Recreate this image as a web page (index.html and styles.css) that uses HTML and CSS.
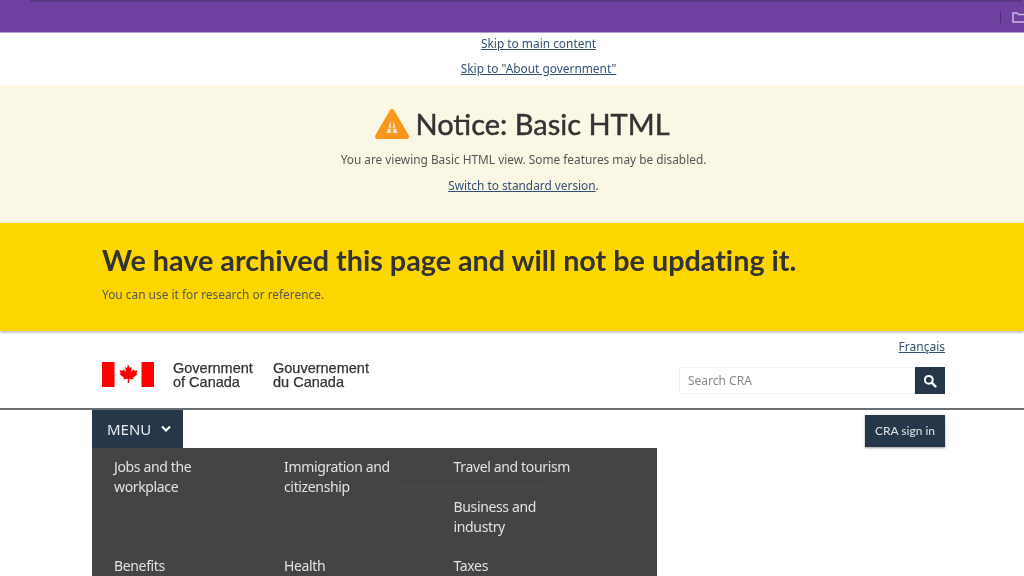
FILE: index.html
```html
<!DOCTYPE html>
<html lang="en">
<head>
<meta charset="utf-8">
<title>We have archived this page</title>
<link rel="stylesheet" href="styles.css">
</head>
<body>
<div class="browser-bar">
  <div class="browser-strip"></div>
  <div class="browser-tools">
    <span class="tool-divider"></span>
    <svg class="tool-folder" width="14" height="11" viewBox="0 0 14 11"><path d="M1 1h4l1.500 1.500H13V10H1z" fill="none" stroke="#cdbbe2" stroke-width="1.500"/></svg>
  </div>
</div>
<nav class="skip">
  <a href="#main">Skip to main content</a>
  <a href="#about">Skip to "About government"</a>
</nav>
<section class="notice">
  <h2 class="notice-title">
    <svg class="notice-icon" width="36" height="32" viewBox="0 0 36 32"><path d="M18 3.500 L32.500 28.500 H3.500 Z" fill="#f7981d" stroke="#f7981d" stroke-width="5" stroke-linejoin="round"/><path d="M18 9.500 L23.500 25 H12.500 Z" fill="#fdeccd"/><path d="M16.800 9h2.400v10h-2.400zM16.800 21h2.400v4h-2.400zM12 19.500h12v1.300H12z" fill="#f7981d"/></svg>
    Notice: Basic HTML
  </h2>
  <p class="notice-text">You are viewing Basic HTML view. Some features may be disabled.</p>
  <p class="notice-text notice-switch"><a href="#standard">Switch to standard version</a>.</p>
</section>
<section class="archived">
  <h2 class="archived-title">We have archived this page and will not be updating it.</h2>
  <p class="archived-text">You can use it for research or reference.</p>
</section>
<header class="site-header">
  <div class="brand">
    <svg class="flag" width="52" height="25" viewBox="0 0 52 25">
      <rect width="12.500" height="25" fill="#f00"/>
      <rect x="39.500" width="12.500" height="25" fill="#f00"/>
      <path d="M26 2.500l2 3.600 1.900-1-.7 4.700 2.500-2.500.6 1.500 3.100-.6-1 3.300 1.200.6-4.500 3.700.5 1.600-4.400-.6.100 4.200h-1.600l.1-4.200-4.400.6.500-1.600-4.500-3.700 1.200-.6-1-3.300 3.100.6.600-1.500 2.500 2.500-.7-4.700 1.900 1z" fill="#f00"/>
    </svg>
    <div class="sig sig-en">Government<br>of Canada</div>
    <div class="sig sig-fr">Gouvernement<br>du Canada</div>
  </div>
  <div class="header-tools">
    <a class="lang" href="#fr">Français</a>
    <form class="search">
      <span class="search-input">Search CRA</span>
      <span class="search-btn">
        <svg width="14" height="14" viewBox="0 0 14 14"><circle cx="5.800" cy="5.800" r="3.900" fill="none" stroke="#fff" stroke-width="2"/><path d="M8.700 8.700l3.700 3.700" stroke="#fff" stroke-width="2.400" stroke-linecap="round"/></svg>
      </span>
    </form>
  </div>
</header>
<div class="nav-area">
  <div class="nav-left">
    <div class="menu-btn">MENU
      <svg width="12" height="8" viewBox="0 0 12 8"><path d="M2 1.500l4 4 4-4" fill="none" stroke="#fff" stroke-width="2.200"/></svg>
    </div>
    <div class="menu-panel">
      <div class="menu-col">
        <a class="item item-a">Jobs and the<br>workplace</a>
      </div>
      <div class="menu-col">
        <a class="item item-b">Immigration and<br>citizenship</a>
      </div>
      <div class="menu-col">
        <a class="item item-c">Travel and tourism</a>
        <a class="item item-c">Business and<br>industry</a>
      </div>
      <div class="menu-col"><a class="item item-a no-rule">Benefits</a></div>
      <div class="menu-col"><a class="item item-b no-rule">Health</a></div>
      <div class="menu-col"><a class="item item-c no-rule">Taxes</a></div>
    </div>
  </div>
  <a class="signin">CRA sign in</a>
</div>
</body>
</html>
```
FILE: styles.css
```css
* { box-sizing: border-box; }
html, body { margin: 0; height: 576px; overflow: hidden; }
body { width: 1024px; background: #fff; font-family: "Noto Sans", sans-serif; color: #333; filter: blur(0.6px); }
a { color: #335075; text-decoration: underline; }
h2, p { margin: 0; }

.browser-bar { height: 33px; background: #6e41a0; border-bottom: 1px solid #b79fd3; display: flex; flex-direction: column; }
.browser-strip { height: 2px; margin: 0 2px 0 30px; background: #5a3785; }
.browser-tools { display: flex; justify-content: flex-end; align-items: center; gap: 11px; height: 29px; margin-right: -2px; padding-top: 1px; }
.tool-divider { width: 1px; height: 11px; background: #4a2a70; }

.skip { height: 52px; display: flex; flex-direction: column; align-items: center; padding: 0 0 0 53px; gap: 5px; font-size: 11.900px; line-height: 20px; }

.notice { height: 138px; background: #fbf7e5; display: flex; flex-direction: column; align-items: center; padding: 20px 0 0 20px; }
.notice-title { display: flex; align-items: center; gap: 5px; font: 400 29px/37px Lato, sans-serif; color: #333; -webkit-text-stroke: .45px #333; }
.notice-text { font-size: 11.850px; line-height: 20px; margin: 7px 0 0 3px; color: #555; }
.notice-switch { margin-top: 6px; }

.archived { height: 108px; background: #ffd700; padding: 18px 0 0 102px; box-shadow: 0 1px 3px rgba(0,0,0,.35); position: relative; }
.archived-title { font: 700 28.750px/39px Lato, sans-serif; color: #333; font-variant-ligatures: none; }
.archived-text { font-size: 11.900px; line-height: 18px; margin-top: 5px; color: #555; }

.site-header { height: 79px; display: flex; justify-content: space-between; padding: 0 79px 0 102px; border-bottom: 2px solid #6b6e73; }
.brand { display: flex; align-items: flex-start; padding-top: 31px; }
.flag { flex: none; }
.sig { font: 14.500px/14px "Liberation Sans", Arial, sans-serif; color: #333; -webkit-text-stroke: .25px #333; margin-top: -1px; }
.sig-en { margin-left: 19px; width: 100px; }
.lang { font-size: 12px; line-height: 18px; margin-top: 7px; }
.header-tools { display: flex; flex-direction: column; align-items: flex-end; }
.search { display: flex; margin-top: 11px; width: 266px; height: 27px; }
.search-input { flex: 1; border: 1px solid #f2f2f2; font-size: 12px; line-height: 25px; padding-left: 8px; color: #888; }
.search-btn { width: 30px; background: #26374a; display: flex; align-items: center; justify-content: center; }

.nav-area { display: flex; justify-content: space-between; align-items: flex-start; padding: 0 79px 0 92px; }
.nav-left { width: 565px; }
.menu-btn { width: 91px; height: 38px; background: #26374a; color: #e6eaee; font-size: 15px; display: flex; align-items: center; gap: 9px; padding-left: 15px; }
.menu-panel { height: 140px; background: #444; display: grid; grid-template-columns: 170px 169.500px 170px; grid-template-rows: 99px auto; padding-left: 22px; align-content: start; }
.menu-col { display: flex; flex-direction: column; align-items: flex-start; }
.item { display: block; color: #e2e2e2; font-size: 14px; letter-spacing: -.35px; line-height: 20px; padding-top: 9px; padding-bottom: 10px; border-bottom: 1px solid #494949; text-decoration: none; white-space: nowrap; }
.item-a { margin-left: -19px; padding-left: 19px; width: 142px; }
.item-b { margin-left: -37px; padding-left: 37px; width: 146px; }
.item-c { margin-left: -55px; padding-left: 55px; width: 147px; }
.no-rule { border-bottom: 0; }
.signin { margin-top: 5px; width: 80px; height: 32px; background: #26374a; color: #d8dde2; font: 500 12px/32px Lato, sans-serif; text-align: center; text-decoration: none; box-shadow: 0 1px 2px rgba(0,0,0,.4); }
```
